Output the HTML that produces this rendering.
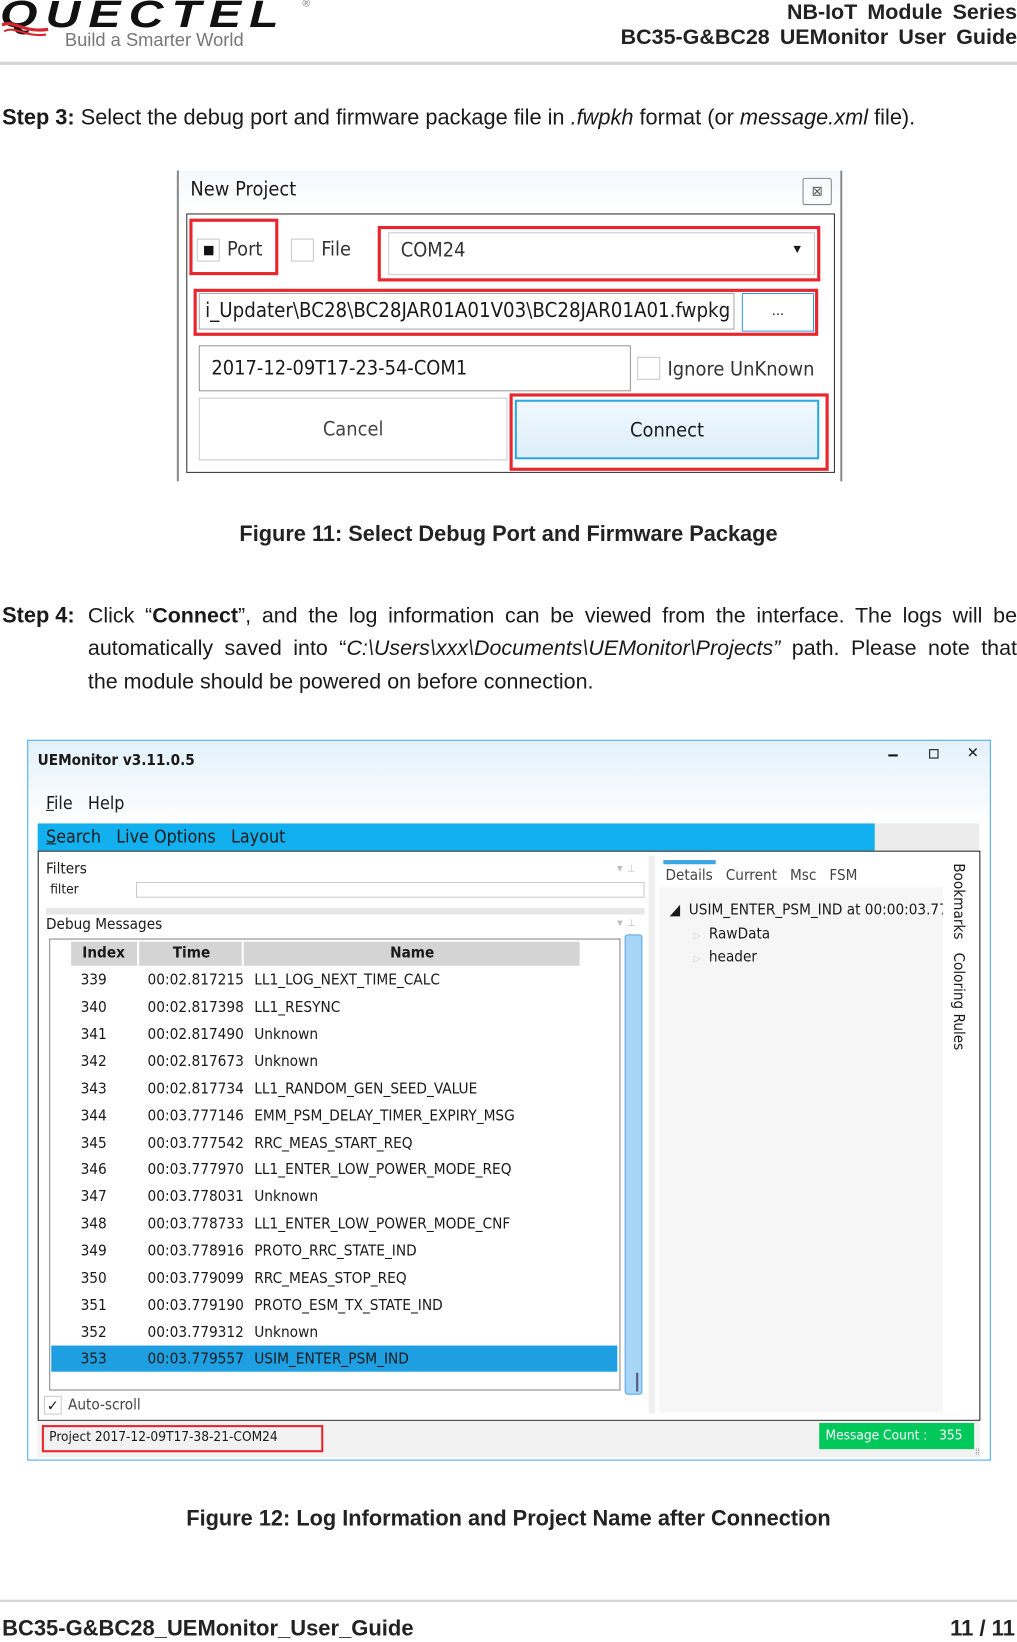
<!DOCTYPE html>
<html><head><meta charset="utf-8"><style>
*{margin:0;padding:0;box-sizing:border-box}
html,body{width:1017px;height:1640px;overflow:hidden;background:#fff}
#w{position:absolute;left:0;top:0;width:972px;height:1568px;transform:scale(1.0463);transform-origin:0 0;font-family:"Liberation Sans",sans-serif;color:#1a1a1a}
.a{position:absolute;white-space:nowrap}
.t{font-family:"DejaVu Sans Condensed","Liberation Sans",sans-serif}
.red{position:absolute;border:3px solid #e8262d}
.cb{position:absolute;width:22px;height:22px;border:1px solid #c8c8c8;background:#fff}
.row{position:absolute;left:49px;width:541px;height:25px;font-size:14.6px;line-height:25px}
.row span{position:absolute}
.jl{position:absolute;left:84px;width:888px;font-size:20.5px;white-space:nowrap;text-align:justify;text-align-last:justify}
</style></head><body><div id="w">
<!-- header -->
<div class="a" style="left:0;top:-7px;font:italic 900 36px 'Liberation Sans';color:#111;letter-spacing:6px;transform:scaleX(1.28);transform-origin:0 0">QUECTEL</div>
<svg class="a" style="left:0;top:16px" width="50" height="22"><path d="M2 8 C12 2 22 16 46 12" stroke="#d9252b" stroke-width="3" fill="none"/><path d="M4 14 C14 8 24 20 44 17" stroke="#d9252b" stroke-width="2" fill="none"/></svg>
<div class="a" style="left:62px;top:28px;font-size:17.5px;color:#777">Build a Smarter World</div>
<div class="a" style="left:289px;top:-2px;font-size:10px;color:#777">®</div>
<div class="a" style="right:0;top:0;font-size:20.5px;font-weight:bold;color:#222;text-align:right;line-height:24px;word-spacing:4px">NB-IoT Module Series<br>BC35-G&amp;BC28 UEMonitor User Guide</div>
<div class="a" style="left:0;top:59px;width:972px;height:3px;background:#d4d4d4"></div>
<!-- step 3 -->
<div class="a" style="left:2px;top:101px;font-size:20.8px"><b>Step 3:</b> Select the debug port and firmware package file in <i>.fwpkh</i> format (or <i>message.xml</i> file).</div>
<!-- dialog -->
<div class="a" style="left:169px;top:163px;width:2px;height:297px;background:#888"></div>
<div class="a" style="left:803px;top:163px;width:2px;height:297px;background:#888"></div>
<div class="a" style="left:171px;top:163px;width:632px;height:297px;background:linear-gradient(#f4f9fd,#fff 40px)"></div>
<div class="a t" style="left:182px;top:170px;font-size:19px">New Project</div>
<div class="a" style="left:767px;top:170px;width:28px;height:26px;border:1px solid #888;border-radius:2px;font-size:13px;text-align:center;line-height:24px;color:#555">⊠</div>
<div class="a" style="left:178px;top:204px;width:620px;height:248px;border:1.5px solid #333;background:#fff"></div>
<div class="red" style="left:181px;top:209px;width:85px;height:54px"></div>
<div class="cb" style="left:188px;top:228px"></div><div class="a" style="left:195px;top:235px;width:9px;height:9px;background:#111"></div>
<div class="a t" style="left:217px;top:227px;font-size:19px;color:#333">Port</div>
<div class="cb" style="left:278px;top:228px"></div>
<div class="a t" style="left:307px;top:227px;font-size:19px;color:#333">File</div>
<div class="red" style="left:361px;top:216px;width:423px;height:53px"></div>
<div class="a" style="left:371px;top:222px;width:408px;height:41px;border:1px solid #ccc;background:#fff"></div>
<div class="a t" style="left:383px;top:228px;font-size:19px;color:#333">COM24</div>
<div class="a" style="left:756px;top:231px;font-size:12px">▼</div>
<div class="red" style="left:185px;top:276px;width:597px;height:45px"></div>
<div class="a" style="left:190px;top:280px;width:512px;height:35px;border:1px solid #aaa"></div>
<div class="a t" style="left:196px;top:285px;font-size:19.4px">i_Updater\BC28\BC28JAR01A01V03\BC28JAR01A01.fwpkg</div>
<div class="a" style="left:709px;top:280px;width:69px;height:37px;border:1.5px solid #3a9be0;text-align:center;font-size:14px;line-height:30px">...</div>
<div class="a" style="left:190px;top:330px;width:413px;height:44px;border:1px solid #999"></div>
<div class="a t" style="left:202px;top:341px;font-size:19px">2017-12-09T17-23-54-COM1</div>
<div class="cb" style="left:609px;top:341px"></div>
<div class="a t" style="left:638px;top:342px;font-size:19px;color:#333">Ignore UnKnown</div>
<div class="a t" style="left:190px;top:380px;width:295px;height:60px;border:1px solid #ccc;text-align:center;line-height:58px;font-size:19px;color:#444">Cancel</div>
<div class="red" style="left:487px;top:376px;width:305px;height:74px"></div>
<div class="a t" style="left:492px;top:382px;width:291px;height:57px;border:2px solid #2ea8e0;background:linear-gradient(#f2f9fe,#dcedf8);text-align:center;line-height:55px;font-size:19px">Connect</div>
<div class="a" style="left:0;top:499px;width:972px;text-align:center;font-size:20.8px;font-weight:bold;color:#222">Figure 11: Select Debug Port and Firmware Package</div>
<!-- step 4 -->
<div class="a" style="left:2px;top:577px;font-size:20.8px"><b>Step 4:</b></div>
<div class="jl" style="top:577px">Click “<b>Connect</b>”, and the log information can be viewed from the interface. The logs will be</div>
<div class="jl" style="top:608px">automatically saved into “<i>C:\Users\xxx\Documents\UEMonitor\Projects”</i> path. Please note that</div>
<div class="a" style="left:84px;top:640px;font-size:20.5px">the module should be powered on before connection.</div>
<!-- UEMonitor -->
<div class="a" style="left:26px;top:707px;width:921px;height:689px;border:1.5px solid #4aa8e6;background:linear-gradient(#e3f1fc,#fff 80px)"></div>
<div class="a t" style="left:36px;top:719px;font-size:14.5px;font-weight:bold">UEMonitor v3.11.0.5</div>
<div class="a" style="left:849px;top:721px;width:9px;height:2px;background:#111"></div>
<div class="a" style="left:888px;top:716px;width:9px;height:9px;border:1.5px solid #111"></div>
<div class="a" style="left:924px;top:711px;font-size:14px">✕</div>
<div class="a t" style="left:44px;top:758px;font-size:17px"><u>F</u>ile&nbsp;&nbsp;&nbsp;Help</div>
<div class="a" style="left:36px;top:787px;width:900px;height:26px;background:#ececec"></div>
<div class="a t" style="left:36px;top:787px;width:800px;height:26px;background:#12b0ee;font-size:17px;line-height:26px;padding-left:8px"><u>S</u>earch&nbsp;&nbsp;&nbsp;Live Options&nbsp;&nbsp;&nbsp;Layout</div>
<div class="a" style="left:36px;top:813px;width:901px;height:545px;border:1.5px solid #222;background:#fff"></div>
<div class="a t" style="left:44px;top:823px;font-size:14.5px">Filters</div>
<div class="a t" style="left:48px;top:843px;font-size:13px">filter</div>
<div class="a" style="left:130px;top:843px;width:486px;height:15px;border:1px solid #ccc"></div>
<div class="a" style="left:44px;top:868px;width:572px;height:6px;background:#e6e6e6"></div>
<div class="a" style="left:588px;top:825px;font-size:9px;color:#bbb">▼ ⊥</div>
<div class="a t" style="left:44px;top:876px;font-size:14.5px">Debug Messages</div>
<div class="a" style="left:588px;top:877px;font-size:9px;color:#bbb">▼ ⊥</div>
<div class="a" style="left:47px;top:897px;width:546px;height:432px;border:1px solid #888"></div>
<div class="a t" style="left:68px;top:900px;width:486px;height:23px;background:#d4d4d4;font-size:14.5px;font-weight:bold;line-height:23px">
<span class="a" style="left:0;width:62px;text-align:center">Index</span><span class="a" style="left:63px;width:2px;height:23px;background:#fff"></span>
<span class="a" style="left:66px;width:98px;text-align:center">Time</span><span class="a" style="left:163px;width:2px;height:23px;background:#fff"></span>
<span class="a" style="left:166px;width:320px;text-align:center">Name</span></div>
<div class="t">
<div class="row" style="top:924px"><span style="left:28px">339</span><span style="left:92px">00:02.817215</span><span style="left:194px">LL1_LOG_NEXT_TIME_CALC</span></div>
<div class="row" style="top:950px"><span style="left:28px">340</span><span style="left:92px">00:02.817398</span><span style="left:194px">LL1_RESYNC</span></div>
<div class="row" style="top:976px"><span style="left:28px">341</span><span style="left:92px">00:02.817490</span><span style="left:194px">Unknown</span></div>
<div class="row" style="top:1002px"><span style="left:28px">342</span><span style="left:92px">00:02.817673</span><span style="left:194px">Unknown</span></div>
<div class="row" style="top:1028px"><span style="left:28px">343</span><span style="left:92px">00:02.817734</span><span style="left:194px">LL1_RANDOM_GEN_SEED_VALUE</span></div>
<div class="row" style="top:1054px"><span style="left:28px">344</span><span style="left:92px">00:03.777146</span><span style="left:194px">EMM_PSM_DELAY_TIMER_EXPIRY_MSG</span></div>
<div class="row" style="top:1080px"><span style="left:28px">345</span><span style="left:92px">00:03.777542</span><span style="left:194px">RRC_MEAS_START_REQ</span></div>
<div class="row" style="top:1105px"><span style="left:28px">346</span><span style="left:92px">00:03.777970</span><span style="left:194px">LL1_ENTER_LOW_POWER_MODE_REQ</span></div>
<div class="row" style="top:1131px"><span style="left:28px">347</span><span style="left:92px">00:03.778031</span><span style="left:194px">Unknown</span></div>
<div class="row" style="top:1157px"><span style="left:28px">348</span><span style="left:92px">00:03.778733</span><span style="left:194px">LL1_ENTER_LOW_POWER_MODE_CNF</span></div>
<div class="row" style="top:1183px"><span style="left:28px">349</span><span style="left:92px">00:03.778916</span><span style="left:194px">PROTO_RRC_STATE_IND</span></div>
<div class="row" style="top:1209px"><span style="left:28px">350</span><span style="left:92px">00:03.779099</span><span style="left:194px">RRC_MEAS_STOP_REQ</span></div>
<div class="row" style="top:1235px"><span style="left:28px">351</span><span style="left:92px">00:03.779190</span><span style="left:194px">PROTO_ESM_TX_STATE_IND</span></div>
<div class="row" style="top:1261px"><span style="left:28px">352</span><span style="left:92px">00:03.779312</span><span style="left:194px">Unknown</span></div>
<div class="row" style="top:1286px;background:#1e9fe2"><span style="left:28px">353</span><span style="left:92px">00:03.779557</span><span style="left:194px">USIM_ENTER_PSM_IND</span></div>
</div>
<div class="a" style="left:597px;top:893px;width:17px;height:440px;border:1px solid #5aa8e8;border-radius:3px;background:#a8d4f6"></div>
<div class="a" style="left:608px;top:1312px;width:2px;height:18px;background:#557"></div>
<div class="a" style="left:42px;top:1334px;width:17px;height:18px;border:1px solid #ccc;font-size:14px;line-height:16px;text-align:center">✓</div>
<div class="a t" style="left:65px;top:1335px;font-size:14.5px;color:#444">Auto-scroll</div>
<div class="a" style="left:620px;top:818px;width:6px;height:533px;background:#f0f0f0"></div>
<div class="a" style="left:634px;top:822px;width:50px;height:4px;background:#3aa8e4"></div>
<div class="a t" style="left:636px;top:829px;font-size:14.5px;color:#444">Details&nbsp;&nbsp;&nbsp;Current&nbsp;&nbsp;&nbsp;Msc&nbsp;&nbsp;&nbsp;FSM</div>
<div class="a" style="left:630px;top:848px;width:271px;height:502px;background:#f6f6f6"></div>
<div class="a t" style="left:640px;top:862px;width:261px;overflow:hidden;font-size:14.5px">◢&nbsp; USIM_ENTER_PSM_IND at 00:00:03.779</div>
<div class="a t" style="left:663px;top:885px;font-size:14.5px"><span style="color:#ccc;font-size:9px">▷</span>&nbsp; RawData</div>
<div class="a t" style="left:663px;top:907px;font-size:14.5px"><span style="color:#ccc;font-size:9px">▷</span>&nbsp; header</div>
<div class="a t" style="left:908px;top:825px;font-size:14.5px;writing-mode:vertical-rl">Bookmarks&nbsp;&nbsp; Coloring Rules</div>
<div class="a" style="left:36px;top:1358px;width:901px;height:35px;background:#f2f2f2"></div>
<div class="a t" style="left:40px;top:1362px;width:269px;height:26px;border:2.5px solid #e8262d;font-size:13px;line-height:19px;padding-left:5px">Project 2017-12-09T17-38-21-COM24</div>
<div class="a t" style="left:783px;top:1360px;width:148px;height:25px;background:#00c85a;color:#fff;font-size:13px;line-height:25px;padding-left:6px">Message Count :&nbsp;&nbsp; 355</div>
<div class="a" style="left:932px;top:1383px;font-size:8px;color:#666">⁞⁞</div>
<div class="a" style="left:0;top:1440px;width:972px;text-align:center;font-size:20.8px;font-weight:bold;color:#222">Figure 12: Log Information and Project Name after Connection</div>
<!-- footer -->
<div class="a" style="left:0;top:1529px;width:972px;height:2px;background:#d4d4d4"></div>
<div class="a" style="left:2px;top:1545px;font-size:21px;font-weight:bold;color:#222">BC35-G&amp;BC28_UEMonitor_User_Guide</div>
<div class="a" style="right:2px;top:1545px;font-size:21px;font-weight:bold;color:#222">11 / 11</div>
</div></body></html>
